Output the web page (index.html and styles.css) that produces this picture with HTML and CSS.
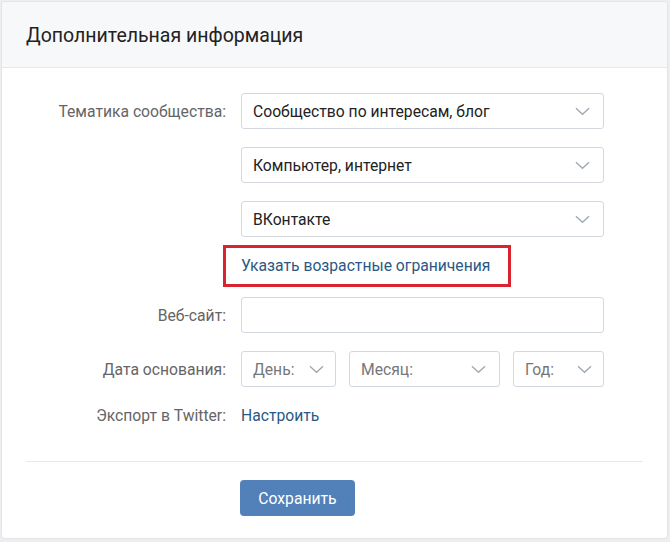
FILE: index.html
```html
<!DOCTYPE html>
<html lang="ru">
<head>
<meta charset="utf-8">
<title>Дополнительная информация</title>
<link rel="stylesheet" href="styles.css">
</head>
<body>
<div class="card">
  <div class="card-header">Дополнительная информация</div>
  <div class="card-body">
    <div class="row">
      <div class="label">Тематика сообщества:</div>
      <div class="field">
        <div class="select"><span>Сообщество по интересам, блог</span><svg class="chev" viewBox="0 0 16 9"><path d="M1 1l7 6.5L15 1"/></svg></div>
      </div>
    </div>
    <div class="row">
      <div class="label"></div>
      <div class="field">
        <div class="select"><span>Компьютер, интернет</span><svg class="chev" viewBox="0 0 16 9"><path d="M1 1l7 6.5L15 1"/></svg></div>
      </div>
    </div>
    <div class="row">
      <div class="label"></div>
      <div class="field">
        <div class="select"><span>ВКонтакте</span><svg class="chev" viewBox="0 0 16 9"><path d="M1 1l7 6.5L15 1"/></svg></div>
      </div>
    </div>
    <div class="row row-age">
      <div class="label"></div>
      <div class="field">
        <a class="age-link" href="#">Указать возрастные ограничения</a>
      </div>
    </div>
    <div class="row row-site">
      <div class="label">Веб-сайт:</div>
      <div class="field">
        <div class="input"></div>
      </div>
    </div>
    <div class="row row-date">
      <div class="label">Дата основания:</div>
      <div class="field date-field">
        <div class="select sel-day placeholder"><span>День:</span><svg class="chev" viewBox="0 0 16 9"><path d="M1 1l7 6.5L15 1"/></svg></div>
        <div class="select sel-month placeholder"><span>Месяц:</span><svg class="chev" viewBox="0 0 16 9"><path d="M1 1l7 6.5L15 1"/></svg></div>
        <div class="select sel-year placeholder"><span>Год:</span><svg class="chev" viewBox="0 0 16 9"><path d="M1 1l7 6.5L15 1"/></svg></div>
      </div>
    </div>
    <div class="row row-twitter">
      <div class="label">Экспорт в Twitter:</div>
      <div class="field">
        <a class="link" href="#">Настроить</a>
      </div>
    </div>
    <div class="divider"></div>
    <div class="actions">
      <button class="btn" type="button">Сохранить</button>
    </div>
  </div>
</div>
</body>
</html>
```

FILE: styles.css
```css
html, body {
  margin: 0;
  padding: 0;
}
body {
  background: #edeef0;
  font-family: Roboto, "Noto Sans", "DejaVu Sans", sans-serif;
  padding: 1px 2px 2px 1px;
  width: 670px;
  height: 542px;
  box-sizing: border-box;
}
.card {
  background: #fff;
  border: 1px solid #e3e4e8;
  border-radius: 4px;
  height: 538px;
  box-sizing: border-box;
  overflow: hidden;
}
.card-header {
  height: 66px;
  box-sizing: border-box;
  background: #f7f8fa;
  border-bottom: 1px solid #e7e8ec;
  padding: 2px 0 0 24px;
  display: flex;
  align-items: center;
  font-size: 19.5px;
  color: #222;
}
.card-body {
  padding-top: 25px;
}
.row {
  display: flex;
  align-items: center;
  margin-bottom: 18px;
}
.label {
  width: 239px;
  flex: none;
  padding-right: 15px;
  box-sizing: border-box;
  text-align: right;
  font-size: 15.7px;
  color: #656565;
  white-space: nowrap;
}
.field {
  width: 363px;
  flex: none;
}
.select, .input {
  height: 36px;
  box-sizing: border-box;
  border: 1px solid #d3d9de;
  border-radius: 3px;
  background: #fff;
  display: flex;
  align-items: center;
  padding: 0 13px 0 11px;
  font-size: 15.7px;
  color: #222;
}
.select span {
  flex: 1;
  white-space: nowrap;
}
.placeholder span {
  color: #777;
}
.chev {
  width: 15px;
  height: 9px;
  flex: none;
}
.chev path {
  fill: none;
  stroke: #a0a8b2;
  stroke-width: 1.4;
}
.row-age {
  margin-top: -10px;
  margin-bottom: 10px;
}
.age-link {
  display: inline-block;
  margin-left: -18px;
  padding: 9px 18px 9px 15px;
  border: 3px solid #d9232e;
  font-size: 15.7px;
  line-height: 18px;
  color: #2a5885;
  text-decoration: none;
}
.row-site {
  margin-bottom: 18px;
}
.date-field {
  display: flex;
  gap: 13px;
}
.sel-day { width: 95px; }
.sel-month { width: 151px; }
.sel-year { width: 91px; }
.sel-day, .sel-year { padding-right: 11px; }
.row-date {
  margin-bottom: 17px;
}
.row-twitter {
  height: 22px;
  margin-bottom: 0;
}
.link {
  font-size: 15.7px;
  color: #2a5885;
  text-decoration: none;
}
.divider {
  height: 1px;
  background: #e7e8ec;
  margin: 35px 24px 0 24px;
}
.actions {
  padding: 18px 0 0 238px;
}
.btn {
  width: 115px;
  height: 36px;
  border: none;
  border-radius: 4px;
  background: #5181b8;
  color: #fff;
  font-family: Roboto, "Noto Sans", sans-serif;
  font-size: 15.7px;
  padding: 0;
}
```
